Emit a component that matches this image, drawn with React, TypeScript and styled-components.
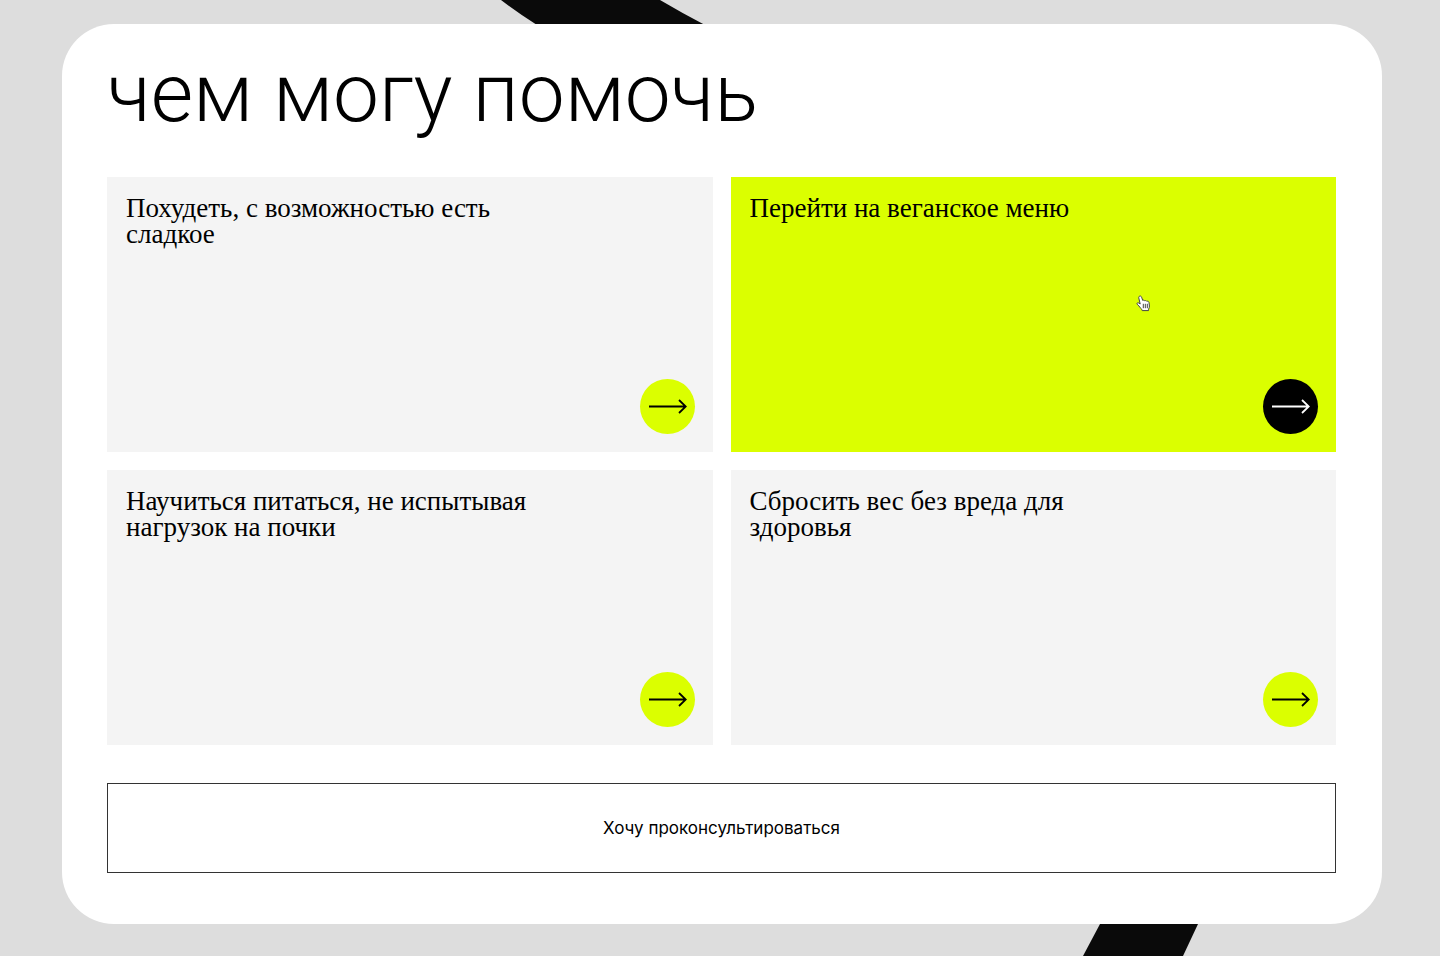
import React from "react";
import styled, { createGlobalStyle } from "styled-components";

const LIME = "#dbff00";
const DISPLAY = 'Roboto, "Liberation Sans", sans-serif';
const SANS = 'Inter, "Liberation Sans", sans-serif';

const GlobalStyle = createGlobalStyle`
  *, *::before, *::after { box-sizing: border-box; }
  body { margin: 0; background: #ddd; color: #000; font-family: ${SANS}; }
`;

const Page = styled.div`
  position: relative;
  min-height: 100vh;
  padding: 24px 58px 32px 62px;
  overflow: hidden;
`;

const Ribbon = styled.svg`
  position: absolute;
  inset: 0;
  width: 100%;
  height: 100%;
`;

const Panel = styled.main`
  position: relative;
  padding: 21px 46px 51px 45px;
  border-radius: 52px;
  background: #fff;
`;

const Title = styled.h1`
  margin: 0 0 36px;
  font-family: ${DISPLAY};
  font-weight: 300;
  font-size: 82px;
  line-height: 96px;
`;

const CardGrid = styled.div`
  display: grid;
  grid-template-columns: repeat(2, minmax(0, 1fr));
  gap: 18px;
`;

const Card = styled.a<{ $active?: boolean }>`
  position: relative;
  display: flex;
  flex-direction: column;
  justify-content: space-between;
  min-height: 275px;
  padding: 18px 18px 18px 19px;
  background: ${(p) => (p.$active ? LIME : "#f4f4f4")};
  color: inherit;
  text-decoration: none;
`;

const CardTitle = styled.span`
  max-width: 420px;
  font-family: "Liberation Serif", serif;
  font-size: 27px;
  line-height: 26px;
`;

const ArrowBadge = styled.span<{ $active?: boolean }>`
  display: flex;
  align-items: center;
  justify-content: center;
  align-self: flex-end;
  width: 55px;
  height: 55px;
  border-radius: 50%;
  background: ${(p) => (p.$active ? "#000" : LIME)};
  color: ${(p) => (p.$active ? "#fff" : "#000")};
`;

const Pointer = styled.svg`
  position: absolute;
  left: 67%;
  top: 118px;
`;

const ConsultButton = styled.button`
  display: block;
  width: 100%;
  height: 90px;
  margin-top: 38px;
  border: 1px solid #333;
  background: transparent;
  color: #000;
  font-family: ${SANS};
  font-size: 17px;
  line-height: 24px;
  cursor: pointer;
`;

const Arrow = () => (
  <svg width="39" height="16" viewBox="0 0 39 16" fill="none" stroke="currentColor" strokeWidth="1.8" aria-hidden="true">
    <path d="M1 7.5H38M31 1L37.8 7.5L31 14" />
  </svg>
);

const HandPointer = () => (
  <Pointer width="15" height="17" viewBox="0 0 15 17" aria-hidden="true">
    <path
      d="M3.6 1.2C4.5.8 5.3 1.3 5.6 2.2L6.7 5.4C7.4 4.9 8.3 5.2 8.7 5.8C9.4 5.4 10.3 5.6 10.8 6.3C11.8 5.9 12.8 6.4 13 7.5L13.4 11C13.5 12.2 13 13.2 12.6 14.2L12.5 15.6H6.2L5.8 14.3C4.6 13.4 3.7 12.2 2.9 10.9L1.2 9.3C.5 8.4 1.4 7.4 2.5 7.9L4.2 9L2.8 3.1C2.6 2.2 2.8 1.5 3.6 1.2Z"
      fill="#fff"
      stroke="#444"
      strokeWidth="1"
    />
    <path d="M7.3 8.8V13.2M9.3 8.8V13.2M11.3 8.8V13.2" stroke="#444" strokeWidth="1" />
  </Pointer>
);

const services = [
  { title: "Похудеть, с возможностью есть сладкое" },
  { title: "Перейти на веганское меню", active: true },
  { title: "Научиться питаться, не испытывая нагрузок на почки" },
  { title: "Сбросить вес без вреда для здоровья" },
];

export default function App() {
  return (
    <>
      <GlobalStyle />
      <Page>
        <Ribbon viewBox="0 0 1440 956" preserveAspectRatio="none" aria-hidden="true">
          <path d="M501 0Q518 13 537 25C760 160 1240 640 1100 924L1083 956H1183L1198 924C1360 560 900 130 705 25Q682 13 660 0Z" fill="#0a0a0a" />
        </Ribbon>
        <Panel>
          <Title>чем могу помочь</Title>
          <CardGrid>
            {services.map(({ title, active }) => (
              <Card key={title} href="#consult" $active={active}>
                <CardTitle>{title}</CardTitle>
                <ArrowBadge $active={active}>
                  <Arrow />
                </ArrowBadge>
                {active && <HandPointer />}
              </Card>
            ))}
          </CardGrid>
          <ConsultButton id="consult" type="button">
            Хочу проконсультироваться
          </ConsultButton>
        </Panel>
      </Page>
    </>
  );
}
